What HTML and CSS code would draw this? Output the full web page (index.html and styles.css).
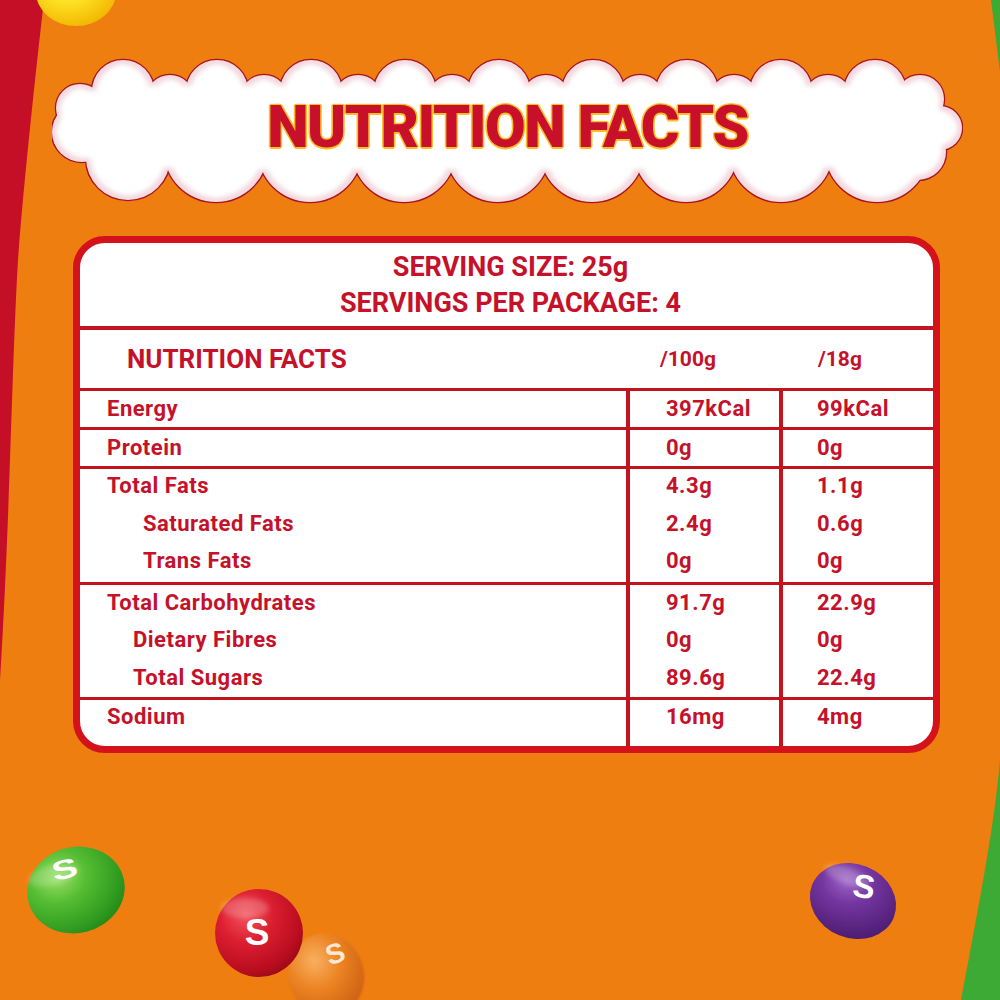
FILE: index.html
```html
<!DOCTYPE html>
<html lang="en">
<head>
<meta charset="utf-8">
<title>Nutrition Facts</title>
<link rel="stylesheet" href="styles.css">
</head>
<body>
<div class="page">
  <svg class="backdrop" viewBox="0 0 1000 1000" xmlns="http://www.w3.org/2000/svg" aria-hidden="true">
    <defs>
      <radialGradient id="gYellow" cx="40%" cy="35%" r="70%">
        <stop offset="0" stop-color="#fff37a"/>
        <stop offset="0.45" stop-color="#fde022"/>
        <stop offset="1" stop-color="#f2b400"/>
      </radialGradient>
      <radialGradient id="gGreen" cx="35%" cy="30%" r="75%">
        <stop offset="0" stop-color="#9be065"/>
        <stop offset="0.4" stop-color="#55bd33"/>
        <stop offset="0.85" stop-color="#2f9a1f"/>
        <stop offset="1" stop-color="#248a18"/>
      </radialGradient>
      <radialGradient id="gRed" cx="35%" cy="30%" r="75%">
        <stop offset="0" stop-color="#f2525a"/>
        <stop offset="0.4" stop-color="#dc1f31"/>
        <stop offset="0.85" stop-color="#b80d1f"/>
        <stop offset="1" stop-color="#9c0a18"/>
      </radialGradient>
      <radialGradient id="gOrange" cx="40%" cy="30%" r="75%">
        <stop offset="0" stop-color="#f9b060"/>
        <stop offset="0.45" stop-color="#ec8424"/>
        <stop offset="1" stop-color="#cc5e10"/>
      </radialGradient>
      <radialGradient id="gPurple" cx="35%" cy="28%" r="75%">
        <stop offset="0" stop-color="#9c63c4"/>
        <stop offset="0.4" stop-color="#7435a0"/>
        <stop offset="1" stop-color="#4e1d73"/>
      </radialGradient>
      <filter id="soft" x="-20%" y="-20%" width="140%" height="140%">
        <feGaussianBlur stdDeviation="1.2"/>
      </filter>
      <filter id="softer" x="-20%" y="-20%" width="140%" height="140%">
        <feGaussianBlur stdDeviation="2.5"/>
      </filter>
    </defs>

    <!-- side bands -->
    <path d="M0 0 H44 C36 70 24 180 18 260 C12 360 10 520 0 680 Z" fill="#c40f26"/>
    <path d="M991 0 H1000 V72 C997 48 994 24 991 0 Z" fill="#3caa35"/>
    <path d="M1000 760 C995 820 981 895 961 1000 H1000 Z" fill="#3caa35"/>

    <!-- yellow candy top left -->
    <ellipse cx="76" cy="-8" rx="40" ry="34" fill="url(#gYellow)"/>

    <!-- green candy -->
    <g transform="rotate(-14 76 890)">
      <ellipse cx="76" cy="890" rx="49" ry="43" fill="url(#gGreen)"/>
      <ellipse cx="58" cy="870" rx="26" ry="10" fill="#ffffff" opacity="0.18" filter="url(#softer)"/>
      <text class="candy-s" x="70" y="880" font-size="37" transform="translate(70 867) scale(1.05 0.72) translate(-70 -867)">S</text>
    </g>

    <!-- orange candy (behind red) -->
    <g filter="url(#soft)">
      <ellipse cx="326" cy="975" rx="38" ry="42" fill="url(#gOrange)" transform="rotate(-15 326 975)"/>
    </g>
    <text class="candy-s soft-s" x="335" y="963" font-size="28" transform="rotate(-18 335 953)">S</text>

    <!-- red candy -->
    <circle cx="259" cy="933" r="44" fill="url(#gRed)"/>
    <ellipse cx="245" cy="908" rx="24" ry="10" fill="#ffffff" opacity="0.2" filter="url(#softer)"/>
    <text class="candy-s" x="257" y="945" font-size="37">S</text>

    <!-- purple candy -->
    <g transform="rotate(22 853 901)">
      <ellipse cx="853" cy="901" rx="44" ry="37" fill="url(#gPurple)"/>
      <ellipse cx="838" cy="880" rx="24" ry="8" fill="#ffffff" opacity="0.2" filter="url(#softer)"/>
    </g>
    <text class="candy-s" x="864" y="898" font-size="33" transform="rotate(8 864 886)">S</text>
  </svg>

  <main class="content">
    <header class="cloud">
      <svg class="cloud-shape" viewBox="52 58 911 146" xmlns="http://www.w3.org/2000/svg" aria-hidden="true">
        <defs>
          <g id="blob">
            <circle cx="123" cy="91" r="31"/>
            <circle cx="217" cy="91" r="31"/>
            <circle cx="311" cy="91" r="31"/>
            <circle cx="405" cy="91" r="31"/>
            <circle cx="499" cy="91" r="31"/>
            <circle cx="593" cy="91" r="31"/>
            <circle cx="687" cy="91" r="31"/>
            <circle cx="781" cy="91" r="31"/>
            <circle cx="875" cy="91" r="31"/>
            <circle cx="170" cy="99" r="24"/>
            <circle cx="264" cy="99" r="24"/>
            <circle cx="358" cy="99" r="24"/>
            <circle cx="452" cy="99" r="24"/>
            <circle cx="546" cy="99" r="24"/>
            <circle cx="640" cy="99" r="24"/>
            <circle cx="734" cy="99" r="24"/>
            <circle cx="828" cy="99" r="24"/>
            <circle cx="920" cy="99" r="24"/>
            <circle cx="80" cy="108" r="24"/>
            <circle cx="82" cy="132" r="30"/>
            <circle cx="128" cy="158" r="42"/>
            <circle cx="216" cy="150" r="52"/>
            <circle cx="310" cy="150" r="52"/>
            <circle cx="404" cy="150" r="52"/>
            <circle cx="498" cy="150" r="52"/>
            <circle cx="592" cy="150" r="52"/>
            <circle cx="686" cy="150" r="52"/>
            <circle cx="781" cy="150" r="52"/>
            <circle cx="877" cy="150" r="52"/>
            <circle cx="940" cy="128" r="22"/>
            <circle cx="918" cy="152" r="28"/>
            <rect x="90" y="95" width="830" height="73"/>
          </g>
          <filter id="inner" x="-5%" y="-20%" width="110%" height="140%">
            <feMorphology operator="erode" radius="4"/>
            <feGaussianBlur stdDeviation="2"/>
          </filter>
        </defs>
        <use href="#blob" fill="#f3d9df" stroke="#a8121e" stroke-width="2.5"/>
        <use href="#blob" fill="#f3d9df"/>
        <use href="#blob" fill="#ffffff" filter="url(#inner)"/>
      </svg>
      <h1 class="title">NUTRITION FACTS</h1>
    </header>

    <section class="facts">
      <div class="serving">
        <p>SERVING SIZE: 25g</p>
        <p>SERVINGS PER PACKAGE: 4</p>
      </div>

      <div class="colhead">
        <span class="h1">NUTRITION FACTS</span>
        <span class="h2">/100g</span>
        <span class="h3">/18g</span>
      </div>

      <div class="group single">
        <div class="c1"><div class="line">Energy</div></div>
        <div class="c2"><div class="line">397kCal</div></div>
        <div class="c3"><div class="line">99kCal</div></div>
      </div>

      <div class="group single">
        <div class="c1"><div class="line">Protein</div></div>
        <div class="c2"><div class="line">0g</div></div>
        <div class="c3"><div class="line">0g</div></div>
      </div>

      <div class="group fats">
        <div class="c1">
          <div class="line">Total Fats</div>
          <div class="line sub-a">Saturated Fats</div>
          <div class="line sub-a">Trans Fats</div>
        </div>
        <div class="c2">
          <div class="line">4.3g</div>
          <div class="line">2.4g</div>
          <div class="line">0g</div>
        </div>
        <div class="c3">
          <div class="line">1.1g</div>
          <div class="line">0.6g</div>
          <div class="line">0g</div>
        </div>
      </div>

      <div class="group carbs">
        <div class="c1">
          <div class="line">Total Carbohydrates</div>
          <div class="line sub-b">Dietary Fibres</div>
          <div class="line sub-b">Total Sugars</div>
        </div>
        <div class="c2">
          <div class="line">91.7g</div>
          <div class="line">0g</div>
          <div class="line">89.6g</div>
        </div>
        <div class="c3">
          <div class="line">22.9g</div>
          <div class="line">0g</div>
          <div class="line">22.4g</div>
        </div>
      </div>

      <div class="group last">
        <div class="c1"><div class="line">Sodium</div></div>
        <div class="c2"><div class="line">16mg</div></div>
        <div class="c3"><div class="line">4mg</div></div>
      </div>
    </section>
  </main>
</div>
</body>
</html>
```

FILE: styles.css
```css
* {
  box-sizing: border-box;
  margin: 0;
  padding: 0;
}

body {
  margin: 0;
  background: #ef7e10;
  font-family: Roboto, "Liberation Sans", Arial, sans-serif;
}

.page {
  position: relative;
  width: 1000px;
  height: 1000px;
  overflow: hidden;
  background: #ef7e10;
}

.backdrop {
  position: absolute;
  left: 0;
  top: 0;
  width: 1000px;
  height: 1000px;
}

.candy-s {
  fill: #ffffff;
  font-family: "Liberation Sans", Arial, sans-serif;
  font-weight: 700;
  text-anchor: middle;
}

.soft-s {
  fill: #fde9d2;
}

.content {
  position: relative;
  padding-top: 58px;
}

/* ---------- cloud title ---------- */
.cloud {
  position: relative;
  width: 911px;
  height: 146px;
  margin-left: 52px;
  display: flex;
  align-items: center;
  justify-content: center;
  padding-bottom: 9px;
}

.cloud-shape {
  position: absolute;
  left: 0;
  top: 0;
  width: 911px;
  height: 146px;
}

.title {
  position: relative;
  font-family: Roboto, "Liberation Sans", Arial, sans-serif;
  font-size: 59px;
  font-weight: 900;
  line-height: 1;
  color: #c8102a;
  letter-spacing: -1.5px;
  text-shadow:
    0 0 1px #f8b81c,
    1.5px 0 0 #f8c02a,
    -1.5px 0 0 #f8c02a,
    0 1.5px 0 #f8c02a,
    0 -1.5px 0 #f8c02a,
    1px 1px 1px #f8c02a,
    -1px -1px 1px #f8c02a,
    1px -1px 1px #f8c02a,
    -1px 1px 1px #f8c02a;
}

/* ---------- facts panel ---------- */
.facts {
  width: 867px;
  height: 517px;
  margin: 32px 0 0 73px;
  border: 7px solid #d3121c;
  border-radius: 32px;
  background: #ffffff;
  color: #c5112a;
  font-weight: 700;
  display: flex;
  flex-direction: column;
  overflow: hidden;
}

.serving {
  height: 87px;
  flex: none;
  border-bottom: 4px solid #c3131d;
  padding: 6px 0 0 8px;
  text-align: center;
  font-size: 27px;
  line-height: 36px;
}

.colhead {
  flex: none;
  display: grid;
  grid-template-columns: 550px 153px 150px;
  height: 61px;
  border-bottom: 3px solid #c3131d;
  line-height: 58px;
}

.colhead .h1 {
  font-size: 26px;
  padding-left: 47px;
}

.colhead .h2 {
  font-size: 21px;
  padding-left: 30px;
}

.colhead .h3 {
  font-size: 21px;
  padding-left: 35px;
}

.group {
  flex: none;
  display: grid;
  grid-template-columns: 550px 153px 150px;
  border-bottom: 3px solid #c3131d;
  font-size: 22px;
  letter-spacing: 0.5px;
}

.group .c1,
.group .c2 {
  border-right: 4px solid #c3131d;
}

.group .c1 {
  padding-left: 27px;
}

.group .c2 {
  padding-left: 36px;
}

.group .c3 {
  padding-left: 34px;
}

.single {
  height: 39px;
}

.single .line {
  height: 36px;
  line-height: 36px;
}

.fats {
  height: 116px;
}

.fats .line {
  height: 37.67px;
  line-height: 33px;
}

.carbs {
  height: 115px;
}

.carbs .line {
  height: 37.33px;
  line-height: 35px;
}

.last {
  flex: 1;
  border-bottom: 0;
}

.last .line {
  line-height: 33px;
}

.group .sub-a {
  padding-left: 36px;
}

.group .sub-b {
  padding-left: 26px;
}

.line {
  white-space: nowrap;
}
```
